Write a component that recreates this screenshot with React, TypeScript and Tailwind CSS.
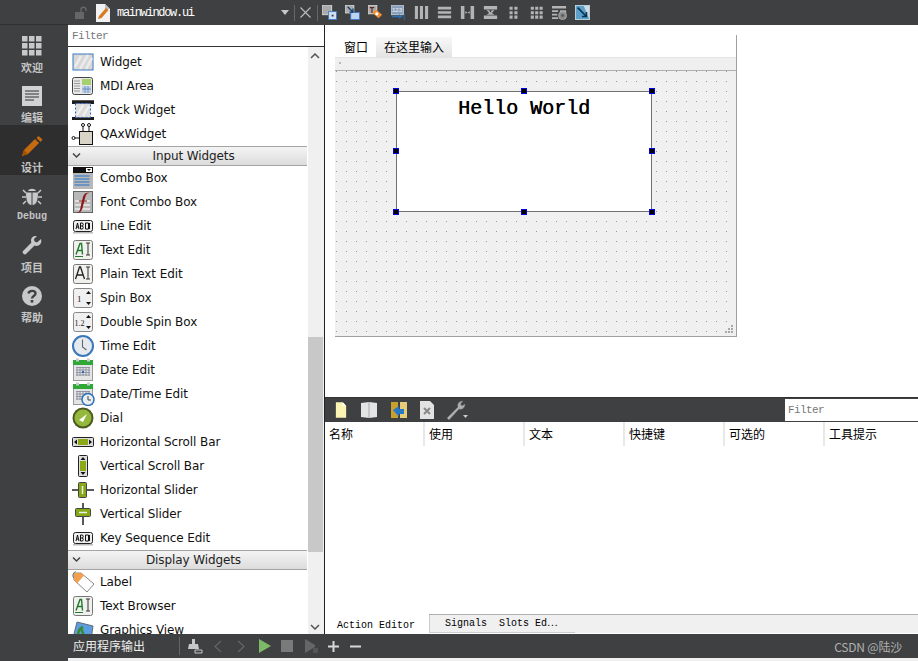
import React from "react";

const UI = "font-['DejaVu_Sans','Noto_Sans_CJK_SC',sans-serif]";
const CJK = "font-['Noto_Sans_CJK_SC',sans-serif]";
const MONO = "font-['Liberation_Mono','Noto_Sans_CJK_SC',monospace]";

const Grid9 = () => (
  <svg width="20" height="20" viewBox="0 0 20 20" fill="#c8c8c8">
    {[0, 7, 14].flatMap((y) => [0, 7, 14].map((x) => <rect key={x + "-" + y} x={x} y={y} width="5.5" height="5.5" />))}
  </svg>
);
const DocIcon = () => (
  <svg width="20" height="20" viewBox="0 0 20 20">
    <rect width="20" height="20" fill="#d2d2d2" />
    <path d="M3 5h14M3 8h14M3 11h14M3 14h9" stroke="#333" strokeWidth="1" />
  </svg>
);
const Pencil = () => (
  <svg width="22" height="22" viewBox="0 0 22 22">
    <path d="M1 21l2-6L14 4l4 4L7 19z" fill="#c66a10" />
    <path d="M15.500 3l2-2 4 3.500-2 2.500z" fill="#c66a10" />
    <path d="M1 21l2-6 4 4z" fill="#a35200" />
  </svg>
);
const Bug = () => (
  <svg width="20" height="20" viewBox="0 0 20 20" fill="#c8c8c8">
    <path d="M6 5c1-3 7-3 8 0z" />
    <path d="M4 6.500h5.500V19C6 19 4 15 4 6.500zM10.500 6.500H16C16 15 14 19 10.500 19z" />
    <path d="M1 4l3 3M19 4l-3 3M0 11h4M20 11h-4M1 18l3-3M19 18l-3-3" stroke="#c8c8c8" strokeWidth="1.500" />
  </svg>
);
const Wrench = () => (
  <svg width="20" height="20" viewBox="0 0 20 20">
    <path d="M19 3l-4 3.500-2.500-1L12 3l3-3c-3-.5-6 1-6 4.500 0 1 .2 1.500.5 2L1 15c-1.500 1.500 1.500 4.500 3 3l8.500-8.500c4 1.500 8-1.500 6.500-6.500z" fill="#c8c8c8" />
  </svg>
);
const Help = () => (
  <svg width="20" height="20" viewBox="0 0 20 20">
    <circle cx="10" cy="10" r="10" fill="#c8c8c8" />
    <path d="M6.500 7.500C7 4 13.500 4 13.500 7.500c0 2.500-3.500 2.500-3.500 5" fill="none" stroke="#3f4041" strokeWidth="2.400" />
    <rect x="8.700" y="14" width="2.600" height="2.600" fill="#3f4041" />
  </svg>
);

function WidgetIcon({ name }: { name: string }) {
  const s = { width: 24, height: 24, viewBox: "0 0 24 24" };
  const frame = "#555";
  switch (name) {
    case "widget":
      return (
        <svg {...s}>
          <rect x="2" y="4" width="20" height="16" fill="#d8d8d8" stroke="#3b78c4" />
          <path d="M4 17L10 6M9 19L17 5M15 19l6-11" stroke="#ececec" strokeWidth="2.500" />
        </svg>
      );
    case "mdi":
      return (
        <svg {...s}>
          <rect x="1.500" y="3.500" width="20" height="17" rx="2" fill="#e8e8e8" stroke="#444" />
          <rect x="11" y="5" width="9" height="6" fill="#a6d070" />
          <rect x="11" y="12" width="9" height="7" fill="#bcd0e8" />
          <path d="M3 7h6M3 9.500h6M3 12h6M3 14.500h6M3 17h6" stroke="#999" />
          <path d="M14 12v7M17 12v7M11 15h9" stroke="#5a7fb0" strokeWidth=".7" />
        </svg>
      );
    case "dock":
      return (
        <svg {...s}>
          <rect x="1" y="2" width="22" height="20" fill="#1c1c1c" />
          <rect x="1" y="2" width="22" height="1" fill="#555" />
          <rect x="1" y="6" width="22" height="13" fill="#fff" />
          <rect x="4.500" y="5.500" width="15" height="14" fill="#ddd" stroke="#2a64c0" strokeDasharray="2 2" />
          <path d="M6 17L12 7M12 18l6-10" stroke="#f2f2f2" strokeWidth="2" />
        </svg>
      );
    case "qax":
      return (
        <svg {...s}>
          <rect x="8.500" y="9.500" width="13" height="13" fill="#d8d4c8" stroke="#111" />
          <path d="M12 9V4M18 9V4M8 16H3" stroke="#111" />
          <circle cx="12" cy="3" r="1.500" fill="#fff" stroke="#111" />
          <circle cx="18" cy="3" r="1.500" fill="#fff" stroke="#111" />
          <circle cx="2.500" cy="16" r="1.500" fill="#fff" stroke="#111" />
        </svg>
      );
    case "combo":
      return (
        <svg {...s}>
          <rect x="2" y="1" width="20" height="22" fill="#b8b8b8" />
          <rect x="2" y="1" width="20" height="6" fill="#111" />
          <rect x="15" y="2" width="6" height="4" fill="#fff" />
          <path d="M16 3h4l-2 2z" fill="#111" />
          <path d="M3.500 10h15M3.500 13h15M3.500 16h15M3.500 19h15" stroke="#6a94c4" strokeWidth="2" />
        </svg>
      );
    case "font":
      return (
        <svg {...s}>
          <rect x="2.500" y="1.500" width="19" height="21" fill="#b8b8b8" stroke="#666" />
          <path d="M4 11h15M4 15h15M4 19h15" stroke="#e0e0e0" strokeWidth="2" />
          <path d="M5 22c4 1 4-2 5-7l2-8c1-4 4-5 7-4-3 0-4 1-5 5l-2 8c-1 5-3 8-7 6z" fill="#8c1414" />
          <path d="M8 11h8" stroke="#8c1414" />
        </svg>
      );
    case "line":
      return (
        <svg {...s}>
          <rect x="2.500" y="6.500" width="19" height="11" rx="2" fill="#eee" stroke="#222" />
          <rect x="2" y="18" width="20" height="1.500" fill="#bbb" />
          <path d="M5 15l1.500-6 1.500 6M5.500 13h2M9.500 15V9h2q1.500 1.500 0 3q1.500 1.500 0 3zM9.500 12h2M14.500 9h3v6h-3z" fill="none" stroke="#111" />
          <path d="M18.500 9v6" stroke="#111" />
        </svg>
      );
    case "text":
    case "plain":
    case "browser": {
      const green = name !== "plain";
      return (
        <svg {...s}>
          <rect x="2.500" y="2.500" width="19" height="19" rx="2" fill="#f0f0ec" stroke="#777" />
          <path d={green ? "M5 16.500l4-11h1.500l1 11M6.500 12.500h4.500" : "M4.500 17l4-12h1l4 12M6 13h6"} fill="none" stroke={green ? "#1f7a2c" : "#222"} strokeWidth={green ? 1.400 : 1.300} />
          {green && <path d="M4 18.500h8" stroke="#1f7a2c" />}
          <path d="M15 5h4M17 5v12M15 17h4" stroke="#333" />
        </svg>
      );
    }
    case "spin":
    case "dspin":
      return (
        <svg {...s}>
          <rect x="2.500" y="2.500" width="19" height="19" rx="2" fill="#f0f0f0" stroke="#888" />
          <path d="M17.500 5l-2.500 3h5zM17.500 19l-2.500-3h5z" fill="#111" />
          <text x={name === "spin" ? 6 : 3.500} y="15.500" fontSize={name === "spin" ? 9 : 8} fontFamily="Liberation Serif, serif" fill="#222">
            {name === "spin" ? "1" : "1.2"}
          </text>
        </svg>
      );
    case "time":
      return (
        <svg {...s}>
          <circle cx="12" cy="12" r="10" fill="#e4eaee" stroke="#3a78b8" strokeWidth="2" />
          <path d="M11.500 5.500V13l4 3" fill="none" stroke="#666" strokeWidth="1.100" />
        </svg>
      );
    case "date":
    case "datetime":
      return (
        <svg {...s}>
          <rect x="2.500" y="2.500" width="19" height="20" fill="#e4e4e4" stroke="#999" />
          <rect x="2" y="2" width="20" height="5" fill="#2fa838" />
          <rect x="5" y="0.500" width="3" height="3" fill="#ccc" />
          <rect x="16" y="0.500" width="3" height="3" fill="#ccc" />
          <path d="M5 9.500h14M5 12h14M5 14.500h14M5 17h14M6 9v9M9 9v9M12 9v9M15 9v9M18 9v9" stroke="#8a8ea0" strokeWidth=".9" />
          {name === "date" ? (
            <rect x="11" y="13" width="2" height="2" fill="#2d6fb4" />
          ) : (
            <>
              <circle cx="17" cy="17.500" r="6" fill="#e8eef2" stroke="#2d6fb4" strokeWidth="1.500" />
              <path d="M17 14v4h3" fill="none" stroke="#444" />
            </>
          )}
        </svg>
      );
    case "dial":
      return (
        <svg {...s}>
          <circle cx="12" cy="12" r="10.500" fill="#4c5a22" />
          <circle cx="12" cy="12" r="8.500" fill="#94b83c" />
          <path d="M8 14l8-6-4 8z" fill="#fff" />
        </svg>
      );
    case "hscroll":
      return (
        <svg {...s}>
          <rect x="1.500" y="7.500" width="21" height="9" rx="1" fill="#ddd" stroke="#222" />
          <rect x="7" y="9" width="10" height="6" fill="#8aa818" />
          <path d="M3 12l3-2.500v5zM21 12l-3-2.500v5z" fill="#111" />
        </svg>
      );
    case "vscroll":
      return (
        <svg {...s}>
          <rect x="7.500" y="1.500" width="9" height="21" rx="1" fill="#ddd" stroke="#222" />
          <rect x="9" y="7" width="6" height="10" fill="#8aa818" />
          <path d="M12 3l-2.500 3h5zM12 21l-2.500-3h5z" fill="#111" />
        </svg>
      );
    case "hslider":
      return (
        <svg {...s}>
          <path d="M1 12h22" stroke="#222" strokeWidth="1.500" />
          <rect x="7.500" y="4.500" width="8" height="15" rx="1" fill="#86a816" stroke="#444" />
          <path d="M11.500 8v8" stroke="#eee" strokeWidth="1.500" />
        </svg>
      );
    case "vslider":
      return (
        <svg {...s}>
          <path d="M12 1v22" stroke="#222" strokeWidth="1.500" />
          <rect x="4.500" y="6.500" width="15" height="8" rx="1" fill="#86a816" stroke="#444" />
          <path d="M8 10.500h8" stroke="#eee" strokeWidth="1.500" />
        </svg>
      );
    case "label":
      return (
        <svg {...s}>
          <path d="M3 3h7l13 11-7 8L3 10z" fill="#fff" stroke="#888" />
          <path d="M3 3h7l3 2.500-7 8L3 10z" fill="#f0a050" />
          <path d="M4.500 1.500C2 3 1 6 3 8" fill="none" stroke="#555" />
        </svg>
      );
    case "graphics":
      return (
        <svg {...s}>
          <path d="M2 20L6 4l16 4-2 14z" fill="#5aa0e0" stroke="#667" />
          <path d="M7 18c0-5 2-8 5-9M10 10l3 8" stroke="#3c8a30" strokeWidth="2.500" fill="none" />
          <path d="M5 20l15 1" stroke="#d8b860" strokeWidth="2" />
        </svg>
      );
    default:
      return <svg {...s}><rect x="3" y="3" width="18" height="18" fill="none" stroke={frame} /></svg>;
  }
}

const rowsA = [
  ["Widget", "widget"],
  ["MDI Area", "mdi"],
  ["Dock Widget", "dock"],
  ["QAxWidget", "qax"],
];
const rowsB = [
  ["Combo Box", "combo"],
  ["Font Combo Box", "font"],
  ["Line Edit", "line"],
  ["Text Edit", "text"],
  ["Plain Text Edit", "plain"],
  ["Spin Box", "spin"],
  ["Double Spin Box", "dspin"],
  ["Time Edit", "time"],
  ["Date Edit", "date"],
  ["Date/Time Edit", "datetime"],
  ["Dial", "dial"],
  ["Horizontal Scroll Bar", "hscroll"],
  ["Vertical Scroll Bar", "vscroll"],
  ["Horizontal Slider", "hslider"],
  ["Vertical Slider", "vslider"],
  ["Key Sequence Edit", "line"],
];
const rowsC = [
  ["Label", "label"],
  ["Text Browser", "browser"],
  ["Graphics View", "graphics"],
];

const Row = ({ label, icon }: { label: string; icon: string }) => (
  <div className="flex h-6 shrink-0 items-center">
    <div className="ml-[3px] mr-[5px] flex w-6 shrink-0 justify-center">
      <WidgetIcon name={icon} />
    </div>
    <span className="whitespace-nowrap text-[12px] tracking-[-0.1px] text-[#111]">{label}</span>
  </div>
);

const Category = ({ label }: { label: string }) => (
  <div className="relative mr-px flex h-5 shrink-0 items-center justify-center border-y border-[#a4a4a4] bg-gradient-to-b from-[#f4f4f4] to-[#dcdcdc] pl-[12px] text-[12px] tracking-[-0.1px] text-[#222]">
    <svg className="absolute left-[4px] top-[5px]" width="9" height="7" viewBox="0 0 9 7">
      <path d="M1 1.500l3.500 3.500L8 1.500" fill="none" stroke="#444" strokeWidth="1.500" />
    </svg>
    {label}
  </div>
);

const NavItem = ({ label, active, mono, icon }: { label: string; active?: boolean; mono?: boolean; icon: React.ReactNode }) => (
  <div className={"flex h-[50px] flex-col items-center pr-[4px] pt-[11px] " + (active ? "bg-[#2e2e2e]" : "")}>
    <div className="flex h-5 items-center justify-center">{icon}</div>
    <span className={"mt-[4px] leading-[14px] font-bold text-[#c4c4c4] " + (mono ? "text-[10px] " + MONO : "text-[11px] " + CJK)}>{label}</span>
  </div>
);

const Handle = ({ cls }: { cls: string }) => (
  <div className={"absolute h-[6px] w-[6px] border border-[#0000e0] bg-black " + cls} />
);

const ToolIcon = ({ d, children }: { d?: string; children?: React.ReactNode }) => (
  <svg width="15" height="15" viewBox="0 0 17 17">
    {d && <path d={d} fill="#b4b4b4" />}
    {children}
  </svg>
);

const tools: React.ReactNode[] = [
  <ToolIcon key="a">
    <rect x="0" y="0" width="11" height="11" fill="#aaa" stroke="#ddd" />
    <rect x="7.500" y="7.500" width="9" height="9" fill="#cfe0f2" stroke="#3a78c0" />
    <rect x="11" y="11" width="2" height="2" fill="#333" />
  </ToolIcon>,
  <ToolIcon key="b">
    <rect x="0" y="0" width="10" height="9" fill="#aaa" stroke="#ddd" />
    <rect x="6.500" y="8.500" width="10" height="8" fill="#bcd4ee" stroke="#3a78c0" />
    <path d="M3 2l6 6M9 4v4H5" stroke="#14406e" strokeWidth="1.500" fill="none" />
  </ToolIcon>,
  <ToolIcon key="c">
    <rect x="0" y="0" width="10" height="10" fill="#aaa" stroke="#ddd" />
    <path d="M2 3h5M4.500 3v6" stroke="#622" strokeWidth="1.300" />
    <path d="M5 9l4-4 7 6-4 4z" fill="#f09030" />
    <circle cx="10" cy="10" r="1.800" fill="#fff" />
  </ToolIcon>,
  <ToolIcon key="d">
    <rect x="0" y="0" width="14" height="11" fill="#8aa0b8" stroke="#c8d4e0" />
    <text x="1" y="8" fontSize="7" fontFamily="Liberation Sans" fill="#eef">123</text>
    <path d="M1 13h10M9 11l3 2-3 2" stroke="#2d6fb4" fill="none" strokeWidth="1.500" />
    <path d="M15 10v7" stroke="#2d6fb4" />
  </ToolIcon>,
  <ToolIcon key="e" d="M1 1h3.500v15H1zM6.700 1h3.500v15H6.700zM12.500 1H16v15h-3.500z" />,
  <ToolIcon key="f" d="M1 2h15v3H1zM1 7h15v3H1zM1 12h15v3H1z" />,
  <ToolIcon key="g" d="M1 1h4v15H1zM12 1h4v15h-4zM6 7l2.500 1.500L11 7v3l-2.500-1.500L6 10z" />,
  <ToolIcon key="h" d="M1 1h15v4H1zM1 12h15v4H1zM7 6l1.500 2.500L10 6h3l-3 3 3 2H4l3-2-3-3z" />,
  <ToolIcon key="i" d="M4 2h3.500v3.500H4zM9.500 2H13v3.500H9.500zM4 7h3.500v3.500H4zM9.500 7H13v3.500H9.500zM4 12h3.500v3.500H4zM9.500 12H13v3.500H9.500z" />,
  <ToolIcon key="j" d="M2 2h3.500v3.500H2zM7 2h3.500v3.500H7zM12 2h3.500v3.500H12zM2 7h3.500v3.500H2zM7 7h3.500v3.500H7zM12 7h3.500v3.500H12zM2 12h3.500v3.500H2zM7 12h3.500v3.500H7zM12 12h3.500v3.500H12z" />,
  <ToolIcon key="k">
    <path d="M0 1h16v3H0zM0 6h7v2H0zM0 10h6v2H0zM0 14h7v2H0z" fill="#b4b4b4" />
    <path d="M9 6h7v3H9z" fill="#b4b4b4" />
    <circle cx="12" cy="12" r="4.500" fill="#888" stroke="#aaa" />
    <circle cx="12" cy="12" r="1.500" fill="#555" />
  </ToolIcon>,
  <ToolIcon key="l">
    <rect x="0.500" y="0.500" width="16" height="16" fill="#5aa0c8" stroke="#c4d8e4" />
    <path d="M10 1h6v15z" fill="#d0dce4" />
    <path d="M3 3l10 10M13 8v5H8" stroke="#0c3050" strokeWidth="1.800" fill="none" />
  </ToolIcon>,
];

const Columns = ["名称", "使用", "文本", "快捷键", "可选的", "工具提示"];

export default function App() {
  return (
    <div className={"flex h-[661px] w-[918px] overflow-hidden bg-white " + UI}>
      <aside className="flex w-[68px] shrink-0 flex-col bg-[#3f4041]">
        <div className="h-[25px] shrink-0 border-b border-[#2f2f2f]" />
        <NavItem label="欢迎" icon={<Grid9 />} />
        <NavItem label="编辑" icon={<DocIcon />} />
        <NavItem label="设计" active icon={<Pencil />} />
        <NavItem label="Debug" mono icon={<Bug />} />
        <NavItem label="项目" icon={<Wrench />} />
        <NavItem label="帮助" icon={<Help />} />
      </aside>

      <div className="flex min-w-0 flex-1 flex-col">
        <header className="flex h-[25px] shrink-0 items-center bg-[#3f4041]">
          <div className="flex w-[250px] shrink-0 items-center">
            <svg className="ml-[6px] shrink-0" width="14" height="14" viewBox="0 0 14 14">
              <rect x="1" y="6" width="9" height="7" fill="#666" />
              <path d="M7 6V3.500C7 0.500 12 0.500 12 3.500V5" fill="none" stroke="#666" strokeWidth="1.500" />
            </svg>
            <svg className="ml-[7px] shrink-0" width="16" height="18" viewBox="0 0 16 18">
              <path d="M1 0h9l5 5v13H1z" fill="#f2f2f2" />
              <path d="M10 0l5 5h-5z" fill="#bbb" />
              <path d="M3 15l1-3 7-8 2.500 2-7 8z" fill="#d87a20" />
            </svg>
            <span className={"ml-[6px] mt-[1px] text-[12px] tracking-[-1.3px] text-white " + MONO}>mainwindow.ui</span>
            <svg className="ml-auto" width="8" height="5" viewBox="0 0 8 5">
              <path d="M0 0h8L4 5z" fill="#c8c8c8" />
            </svg>
            <div className="ml-[5px] h-4 w-px bg-[#666]" />
            <svg className="ml-[5px] mr-[6px]" width="11" height="11" viewBox="0 0 11 11">
              <path d="M.5.500l10 10M10.500.500l-10 10" stroke="#bdbdbd" strokeWidth="1.100" />
            </svg>
            <div className="h-4 w-px bg-[#666]" />
          </div>
          <div className="flex items-center">
            {tools.map((t, i) => (
              <div key={i} className="flex h-[25px] w-[23px] items-center justify-center">{t}</div>
            ))}
          </div>
        </header>

        <div className="flex min-h-0 flex-1">
          <section className="flex w-[257px] shrink-0 flex-col border-r border-[#222]">
            <div className="flex h-[22px] shrink-0 items-center border-b border-[#333] bg-white px-[4px] pt-px">
              <span className={"text-[11px] tracking-[-0.6px] text-[#777] " + MONO}>Filter</span>
            </div>
            <div className="flex min-h-0 flex-1">
              <div className="min-w-0 flex-1 overflow-hidden pt-[3px]">
                {rowsA.map(([l, i]) => <Row key={l} label={l} icon={i} />)}
                <Category label="Input Widgets" />
                {rowsB.map(([l, i]) => <Row key={l} label={l} icon={i} />)}
                <Category label="Display Widgets" />
                {rowsC.map(([l, i]) => <Row key={l} label={l} icon={i} />)}
              </div>
              <div className="relative w-4 shrink-0 bg-[#f0f0f0]">
                <svg className="absolute left-[2px] top-[6px]" width="10" height="6" viewBox="0 0 10 6">
                  <path d="M1 5l4-4 4 4" fill="none" stroke="#555" strokeWidth="1.500" />
                </svg>
                <div className="absolute left-0 top-[290px] h-[215px] w-[15px] bg-[#c8c8c8]" />
                <svg className="absolute bottom-[4px] left-[2px]" width="10" height="6" viewBox="0 0 10 6">
                  <path d="M1 1l4 4 4-4" fill="none" stroke="#555" strokeWidth="1.500" />
                </svg>
              </div>
            </div>
          </section>

          <main className="flex min-w-0 flex-1 flex-col">
            <div className="h-[372px] shrink-0 bg-white pl-[10px] pt-[10px]">
              <div className="flex h-[302px] w-[402px] flex-col border-r border-b border-[#a0a0a0] bg-[#f0f0f0]">
                <div className="flex h-[22px] shrink-0 items-end bg-white pl-[9px]">
                  <span className={"flex h-[20px] items-center text-[12px] text-black " + CJK}>窗口</span>
                  <span className={"ml-[8px] flex h-[20px] items-center bg-gradient-to-b from-[#f8f8f8] to-[#e4e4e4] px-[8px] text-[12px] text-black " + CJK}>在这里输入</span>
                </div>
                <div className="relative h-[14px] shrink-0 border-t border-b border-t-[#e4e4e4] border-b-[#b0b0b0] bg-[#efefef]">
                  <div className="absolute left-[4px] top-[4px] h-[2px] w-[2px] bg-[#bbb]" />
                </div>
                <div className="relative min-h-0 flex-1">
                  <svg className="absolute inset-0" width="100%" height="100%">
                    <defs>
                      <pattern id="dots" x="1" y="0" width="10" height="10" patternUnits="userSpaceOnUse">
                        <rect width="1" height="1" fill="#999" />
                      </pattern>
                    </defs>
                    <rect width="100%" height="100%" fill="url(#dots)" />
                  </svg>
                  <div className="absolute left-[61px] top-[20px] h-[121px] w-[256px] border border-[#707070] bg-white">
                    <div className={"mt-[5px] text-center text-[20px] leading-6 text-black [text-shadow:0.45px_0_0_#000] " + MONO}>Hello World</div>
                  </div>
                  <Handle cls="left-[58px] top-[17px]" />
                  <Handle cls="left-[186px] top-[17px]" />
                  <Handle cls="left-[314px] top-[17px]" />
                  <Handle cls="left-[58px] top-[77px]" />
                  <Handle cls="left-[314px] top-[77px]" />
                  <Handle cls="left-[58px] top-[138px]" />
                  <Handle cls="left-[186px] top-[138px]" />
                  <Handle cls="left-[314px] top-[138px]" />
                  <svg className="absolute bottom-[2px] right-[2px]" width="9" height="9" viewBox="0 0 9 9" fill="#a8a8a8">
                    <rect x="6" y="0" width="2" height="2" />
                    <rect x="3" y="3" width="2" height="2" />
                    <rect x="6" y="3" width="2" height="2" />
                    <rect x="0" y="6" width="2" height="2" />
                    <rect x="3" y="6" width="2" height="2" />
                    <rect x="6" y="6" width="2" height="2" />
                  </svg>
                </div>
              </div>
            </div>

            <div className="flex h-[25px] shrink-0 items-center border-t border-[#333] bg-[#3f4041]">
              <div className="flex items-center pl-[10px]">
                <svg width="12" height="18" viewBox="0 0 14 18">
                  <path d="M1 0h8l4 4v14H1z" fill="#fbf4b4" />
                  <path d="M9 0l4 4H9z" fill="#fff" />
                </svg>
                <svg width="18" height="18" viewBox="0 0 18 18" className="ml-[13px]">
                  <path d="M1 2l8-1v16l-8-1zM9 1l8 1v14l-8 1z" fill="#e4e4e4" />
                  <path d="M9 1v16" stroke="#aaa" />
                </svg>
                <svg width="18" height="18" viewBox="0 0 18 18" className="ml-[12px]">
                  <path d="M1 1h7v16H1z" fill="#c8a030" />
                  <path d="M10 1h7v16h-7z" fill="#e8cc7a" />
                  <path d="M3 9l6-4v3h5v5H9v3z" fill="#2878c8" />
                </svg>
                <svg width="16" height="18" viewBox="0 0 16 18" className="ml-[11px]">
                  <path d="M1 0h10l4 4v14H1z" fill="#e2e2e2" />
                  <path d="M5 7l6 6M11 7l-6 6" stroke="#888" strokeWidth="2" />
                </svg>
                <svg width="22" height="20" viewBox="0 0 22 20" className="ml-[11px]">
                  <path d="M1 18L12 7c-1-3 1-6 5-6l-2.500 3 1.500 2 3-2c0 4-3 6-6 5L3 20z" fill="#b0b0b0" stroke="#777" strokeWidth=".5" />
                  <path d="M17 15h5l-2.500 3z" fill="#ccc" />
                </svg>
              </div>
              <div className="ml-auto flex h-[22px] w-[133px] items-center bg-white px-[3px]">
                <span className={"text-[11px] tracking-[-0.6px] text-[#777] " + MONO}>Filter</span>
              </div>
            </div>

            <div className="flex h-[24px] shrink-0 items-center">
              {Columns.map((c) => (
                <div key={c} className={"flex h-[24px] w-[100px] shrink-0 items-center border-r-2 border-[#e8e8e8] pl-[4px] text-[12px] text-black last:border-r-0 " + CJK}>{c}</div>
              ))}
            </div>
            <div className="min-h-0 flex-1 bg-white" />
            <div className="flex h-[20px] shrink-0 border-t border-[#b0b0b0]">
              <div className={"-mt-px flex h-[20px] w-[104px] items-center justify-center bg-white pr-[2px] pt-[2px] text-[10px] text-black " + MONO}>Action Editor</div>
              <div className={"flex h-[18px] w-[146px] items-center border-b border-l border-[#ccc] bg-[#f0f0f0] pl-[15px] text-[10px] text-black " + MONO}>Signals&nbsp;&nbsp;Slots Ed⋯</div>
              <div className="h-[18px] flex-1 bg-[#f0f0f0]" />
            </div>
          </main>
        </div>

        <footer className="flex h-[24px] shrink-0 items-center bg-[#3f4041]">
          <span className={"ml-[5px] w-[72px] shrink-0 whitespace-nowrap text-[12px] text-[#eee] " + CJK}>应用程序输出</span>
          <div className="ml-[34px] h-[18px] w-px bg-[#666]" />
          <svg className="ml-[8px]" width="15" height="15" viewBox="0 0 15 15">
            <path d="M4 0h3v5h3l1 5H0l1-5h3z" fill="#c8c8c8" />
            <path d="M7 11h7v3H7z" fill="none" stroke="#c8c8c8" />
          </svg>
          <svg className="ml-[11px]" width="8" height="13" viewBox="0 0 8 13">
            <path d="M7 1L1 6.500 7 12" fill="none" stroke="#666" strokeWidth="1.200" />
          </svg>
          <svg className="ml-[15px]" width="8" height="13" viewBox="0 0 8 13">
            <path d="M1 1l6 5.500L1 12" fill="none" stroke="#666" strokeWidth="1.200" />
          </svg>
          <svg className="ml-[14px]" width="12" height="14" viewBox="0 0 12 14">
            <path d="M0 0l12 7-12 7z" fill="#7cb868" />
          </svg>
          <div className="ml-[10px] h-[12px] w-[12px] bg-[#7a7a7a]" />
          <svg className="ml-[12px]" width="13" height="14" viewBox="0 0 13 14">
            <path d="M0 0l10 6v2L0 14z" fill="#666" />
            <path d="M8 9h5v5H8z" fill="#555" />
          </svg>
          <svg className="ml-[9px]" width="13" height="13" viewBox="0 0 13 13">
            <path d="M6.500 1v11M1 6.500h11" stroke="#d8d8d8" strokeWidth="2" />
          </svg>
          <svg className="ml-[9px]" width="13" height="13" viewBox="0 0 13 13">
            <path d="M1 6.500h11" stroke="#d8d8d8" strokeWidth="2" />
          </svg>
          <span className={"ml-auto mr-[16px] mt-[2px] text-[12px] tracking-[-0.2px] text-[#b0b0b0] " + CJK}>CSDN @陆沙</span>
        </footer>
        <div className="h-[3px] shrink-0 bg-[#f0f0f0]" />
      </div>
    </div>
  );
}
